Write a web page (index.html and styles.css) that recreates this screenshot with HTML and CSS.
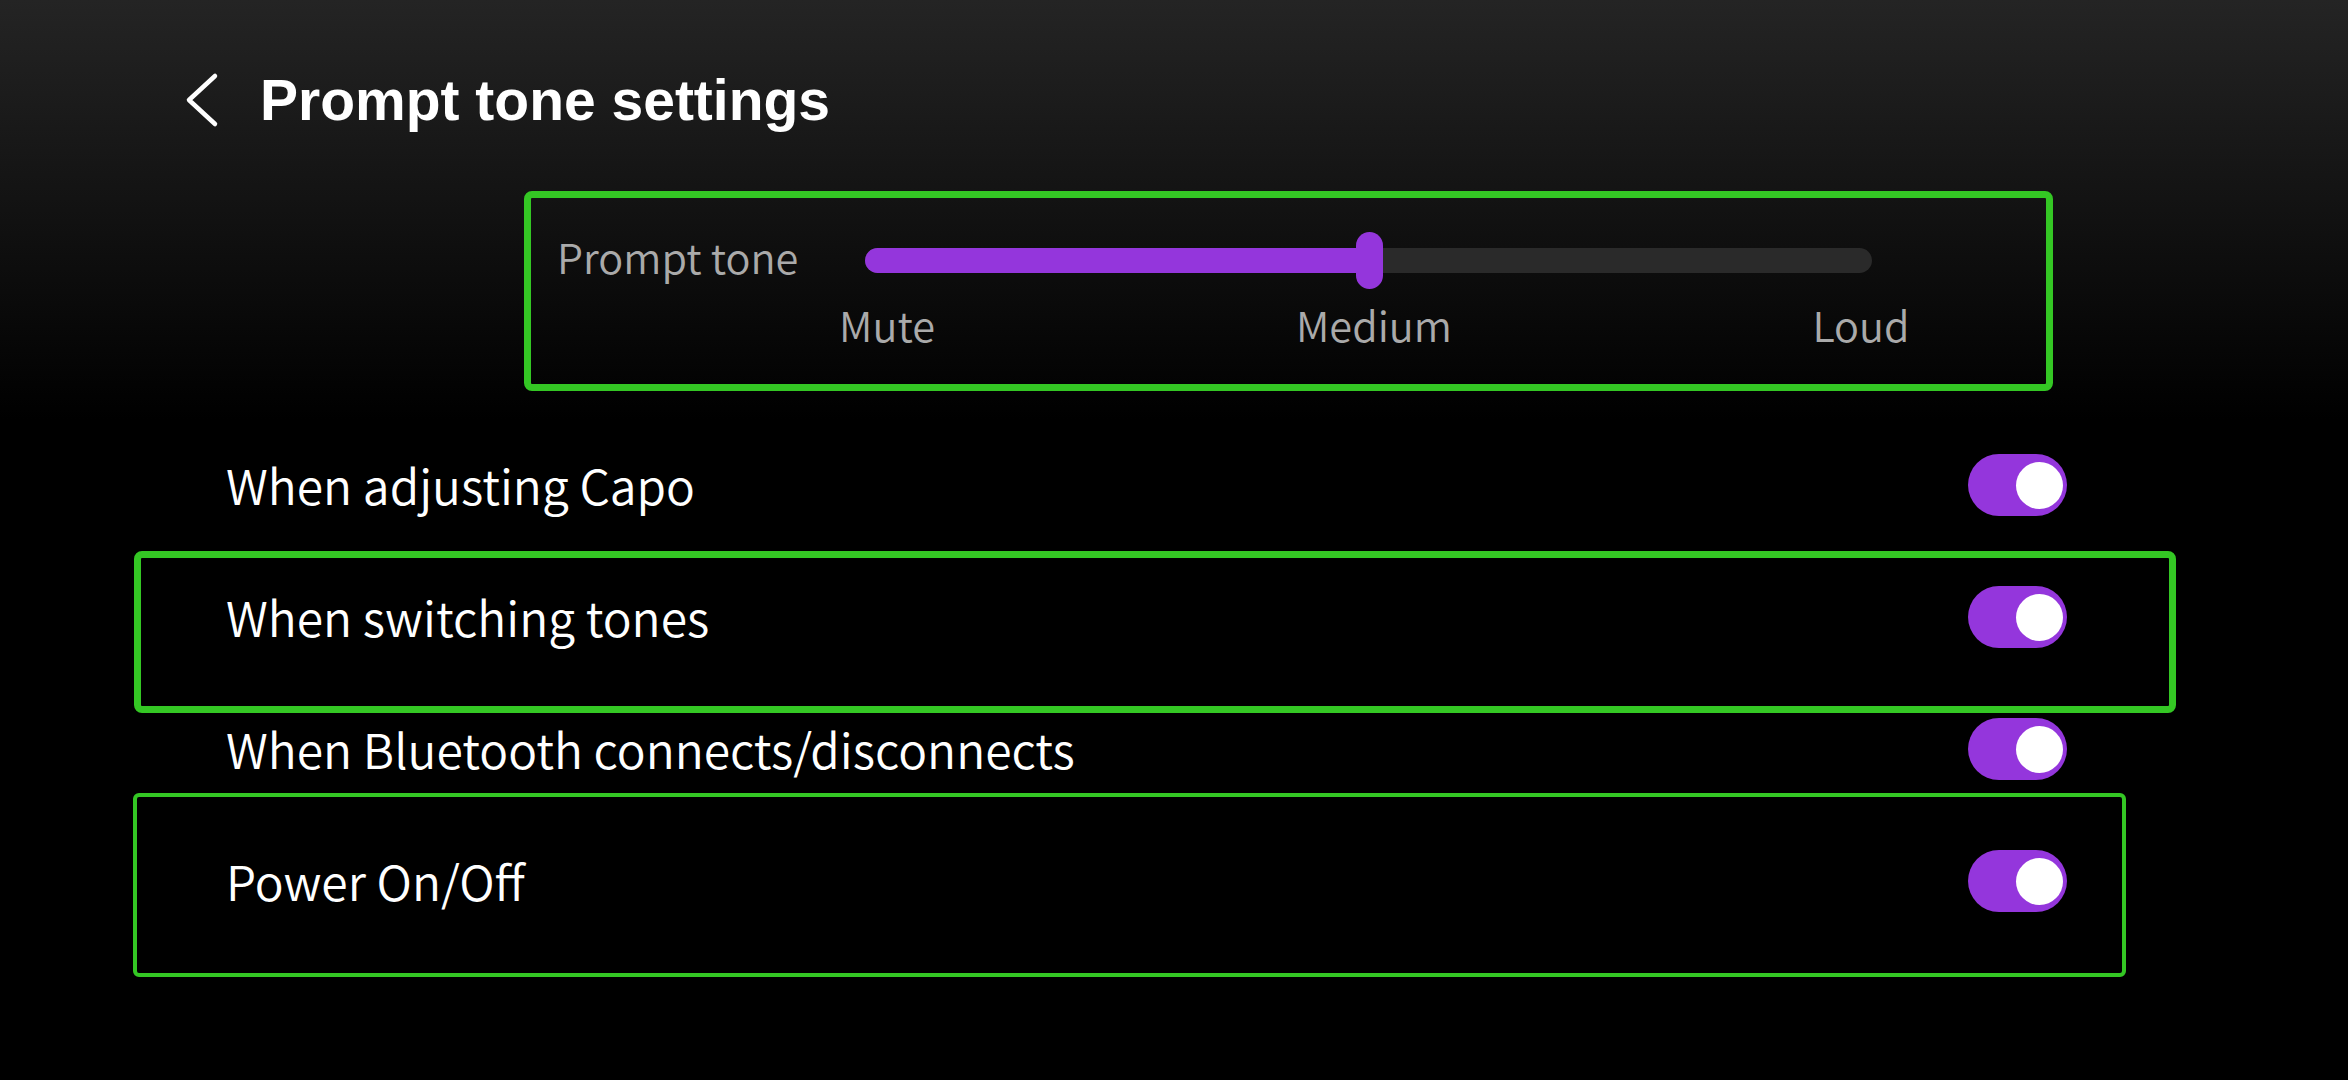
FILE: index.html
```html
<!DOCTYPE html>
<html lang="en">
<head>
<meta charset="utf-8">
<title>Prompt tone settings</title>
<link rel="stylesheet" href="styles.css">
</head>
<body>
<div class="screen">
  <header class="header">
    <svg class="back" viewBox="0 0 36 56" width="36" height="56" aria-hidden="true">
      <polyline points="31,4 5,28 31,52" fill="none" stroke="#ffffff" stroke-width="4.5" stroke-linecap="round" stroke-linejoin="round"/>
    </svg>
    <h1 class="title">Prompt tone settings</h1>
  </header>

  <section class="panel">
    <div class="slider-row">
      <span class="slider-label">Prompt tone</span>
      <div class="track">
        <div class="fill" style="width:505px"></div>
        <div class="thumb" style="left:491px"></div>
      </div>
    </div>
    <div class="ticks">
      <span class="tick">Mute</span>
      <span class="tick">Medium</span>
      <span class="tick">Loud</span>
    </div>
  </section>

  <ul class="list">
    <li class="row">
      <span class="row-text">When adjusting Capo</span>
      <span class="toggle"><span class="knob"></span></span>
    </li>
    <li class="row">
      <span class="mark mark-thick"></span>
      <span class="row-text">When switching tones</span>
      <span class="toggle"><span class="knob"></span></span>
    </li>
    <li class="row">
      <span class="row-text">When Bluetooth connects/disconnects</span>
      <span class="toggle"><span class="knob"></span></span>
    </li>
    <li class="row">
      <span class="mark mark-thin"></span>
      <span class="row-text">Power On/Off</span>
      <span class="toggle"><span class="knob"></span></span>
    </li>
  </ul>
</div>
</body>
</html>
```

FILE: styles.css
```css
html, body {
  margin: 0;
  padding: 0;
}

body {
  width: 2348px;
  height: 1080px;
  overflow: hidden;
  background: linear-gradient(180deg, #242424 0px, #0c0c0c 280px, #000000 420px, #000000 100%);
  font-family: "Noto Sans CJK SC", "Noto Sans", sans-serif;
  font-weight: 350;
  color: #ffffff;
}

.screen {
  display: flex;
  flex-direction: column;
}

.header {
  display: flex;
  align-items: center;
  height: 120px;
  margin-top: 40px;
  padding-left: 184px;
  gap: 40px;
}

.back {
  display: block;
  flex: 0 0 auto;
}

.title {
  margin: 0;
  font-family: "Liberation Sans", Arial, sans-serif;
  font-weight: 700;
  font-size: 57px;
  line-height: 66px;
  color: #ffffff;
}

.panel {
  box-sizing: border-box;
  margin-top: 31px;
  margin-left: 524px;
  width: 1529px;
  height: 200px;
  border: 7px solid #34c724;
  border-radius: 8px;
  padding-top: 34px;
  padding-left: 26px;
}

.slider-row {
  display: flex;
  align-items: center;
  height: 57px;
}

.slider-label {
  flex: 0 0 308px;
  font-size: 41.5px;
  line-height: 1;
  padding-bottom: 7px;
  color: #aaaaaa;
}

.track {
  position: relative;
  width: 1007px;
  height: 25px;
  border-radius: 12.5px;
  background: #2a2a2a;
}

.fill {
  height: 100%;
  border-radius: 12.5px;
  background: #9436dc;
}

.thumb {
  position: absolute;
  top: -16px;
  width: 27px;
  height: 57px;
  border-radius: 13.5px;
  background: #9436dc;
}

.ticks {
  display: flex;
  gap: 287px;
  margin-top: 11px;
  padding-left: 230px;
}

.tick {
  flex: 0 0 200px;
  text-align: center;
  font-size: 41.5px;
  line-height: 54px;
  margin-top: -3px;
  color: #aaaaaa;
}

.list {
  list-style: none;
  margin: 28px 0 0 0;
  padding: 0;
}

.row {
  position: relative;
  display: flex;
  align-items: center;
  justify-content: space-between;
  height: 132px;
  padding: 0 281px 0 226px;
}

.row-text {
  font-size: 48px;
  line-height: 1;
  padding-bottom: 3px;
  color: #ffffff;
}

.toggle {
  display: flex;
  align-items: center;
  justify-content: flex-end;
  box-sizing: border-box;
  width: 99px;
  height: 62px;
  padding: 0 4px;
  border-radius: 31px;
  background: #9436dc;
}

.knob {
  display: block;
  width: 47px;
  height: 47px;
  border-radius: 50%;
  background: #ffffff;
}

.mark {
  position: absolute;
  box-sizing: border-box;
  border-style: solid;
  border-color: #34c724;
  pointer-events: none;
}

.mark-thick {
  top: 0;
  left: 134px;
  width: 2042px;
  height: 162px;
  border-width: 7px;
  border-radius: 8px;
}

.mark-thin {
  top: -22px;
  left: 133px;
  width: 1993px;
  height: 184px;
  border-width: 4px;
  border-radius: 6px;
}
```
